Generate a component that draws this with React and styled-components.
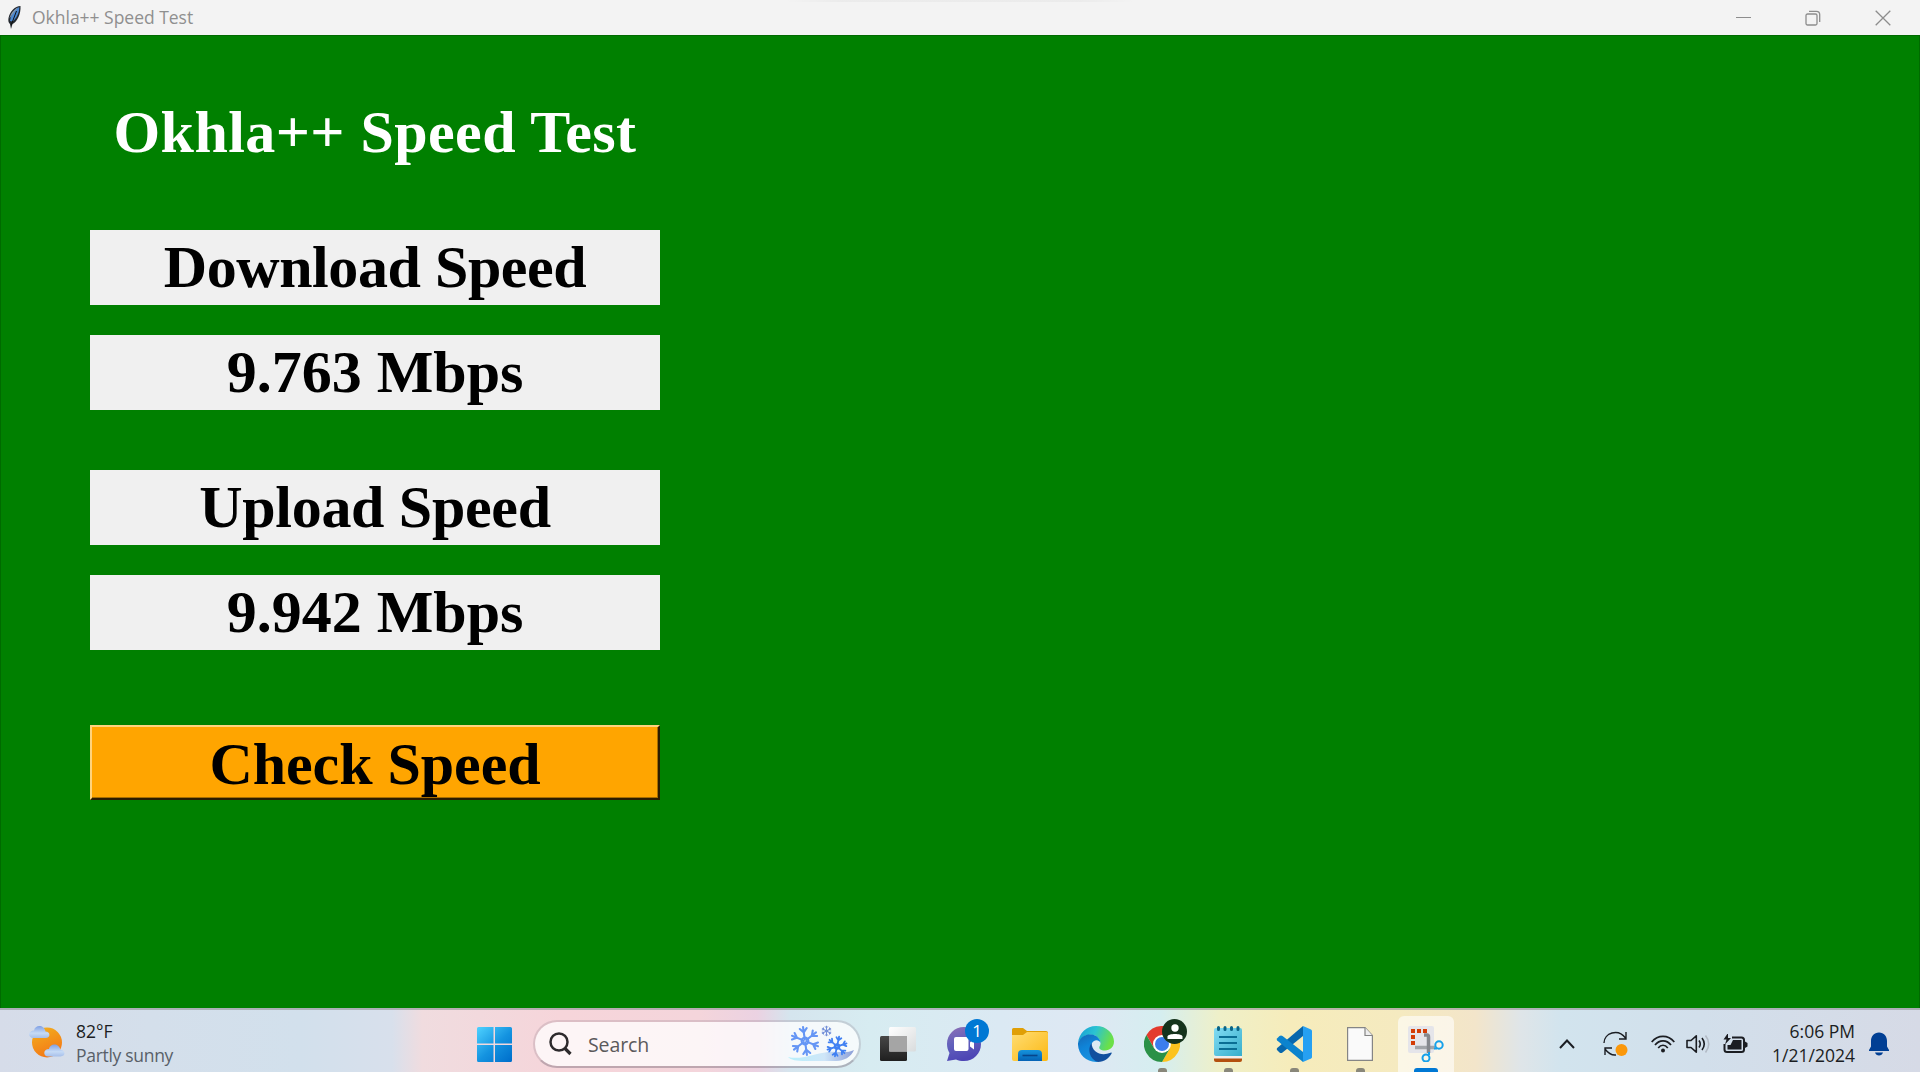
import React from "react";
import styled, { createGlobalStyle } from "styled-components";

const Global = createGlobalStyle`
  html, body { margin: 0; padding: 0; overflow: hidden; }
  * { box-sizing: border-box; }
`;

const Screen = styled.div`
  width: 1920px;
  height: 1072px;
  display: flex;
  flex-direction: column;
  overflow: hidden;
  font-family: "Open Sans", "Noto Sans", sans-serif;
`;

const TitleBar = styled.header`
  height: 35px;
  flex: none;
  display: flex;
  align-items: center;
  background: linear-gradient(90deg, rgba(0, 0, 0, 0), rgba(0, 0, 0, 0.03) 15%, rgba(0, 0, 0, 0.03) 85%, rgba(0, 0, 0, 0))
    785px 0 / 350px 2px no-repeat #f3f3f3;
  padding: 0 2px 0 6px;
  color: #8f8f8f;
`;

const WindowTitle = styled.span`
  margin-left: 10px;
  flex: 1;
  font-size: 17.5px;
  line-height: 35px;
  letter-spacing: -0.02px;
  white-space: nowrap;
`;

const WindowButtons = styled.div`
  display: flex;
`;

const WindowButton = styled.div`
  width: 70px;
  height: 33px;
  display: flex;
  align-items: center;
  justify-content: center;
`;

const Client = styled.main`
  flex: 1;
  background: #008000;
  border: 1px solid #006a00;
  border-bottom: 0;
  padding: 54px 0 0 89px;
`;

const Column = styled.div`
  width: 570px;
  display: flex;
  flex-direction: column;
`;

const Label = styled.div`
  height: 75px;
  margin-top: ${(p) => p.$gap}px;
  background: ${(p) => (p.$plain ? "transparent" : "#f0f0f0")};
  color: ${(p) => (p.$plain ? "#fff" : "#000")};
  font: bold 60px/75px "Liberation Serif", "Times New Roman", serif;
  letter-spacing: ${(p) => p.$track || 0}px;
  text-align: center;
  white-space: nowrap;
`;

const CheckButton = styled.button`
  height: 75px;
  margin-top: 75px;
  padding: 4px 0 0;
  background: #ffa500;
  border: 2px solid;
  border-color: #ffd37d #2b1c00 #2b1c00 #ffd37d;
  box-shadow: inset -1px -1px 0 #a86d00;
  color: #000;
  font: bold 60px/75px "Liberation Serif", "Times New Roman", serif;
  letter-spacing: -0.05px;
  text-align: center;
  display: flex;
  align-items: center;
  justify-content: center;
`;

const Taskbar = styled.footer`
  height: 64px;
  flex: none;
  display: flex;
  align-items: center;
  border-top: 2px solid rgba(150, 150, 155, 0.65);
  background: linear-gradient(90deg, #d6dce9 0, #d4dfeb 150px, #d2e0ec 300px, #d8e0ec 392px,
    #f0dcdf 422px, #f2d9dd 480px, #f6d5da 560px, #f4d5db 700px, #ebd2e2 757px, #d5e5ee 790px,
    #d7ecf1 870px, #dbe9f3 1000px, #dee8f3 1090px, #d5eef0 1160px, #eff0c8 1220px,
    #f6ecbb 1290px, #f5eac0 1400px, #f3e5ca 1475px, #dfe5e8 1520px, #d2e4ee 1560px,
    #d2dfeb 1700px, #d6dae6 1920px);
`;

const Weather = styled.div`
  width: 461px;
  padding: 1px 0 0 27px;
  display: flex;
  align-items: center;
`;

const WeatherText = styled.div`
  margin-left: 11px;
  padding-top: 3px;
  font-size: 17.5px;
  line-height: 24px;
  color: #1b1d22;
  white-space: nowrap;
`;

const Muted = styled.div`
  color: #595f68;
  letter-spacing: -0.3px;
`;

const Slot = styled.div`
  position: relative;
  width: 66px;
  height: 62px;
  padding-top: 6px;
  flex: none;
  display: flex;
  align-items: center;
  justify-content: center;
`;

const Tile = styled.div`
  width: 56px;
  height: 56px;
  border-radius: 6px 6px 0 0;
  background: rgba(255, 255, 255, 0.6);
  display: flex;
  align-items: center;
  justify-content: center;
`;

const Indicator = styled.i`
  position: absolute;
  bottom: 0;
  left: ${(p) => (p.$active ? 21 : 29)}px;
  width: ${(p) => (p.$active ? 24 : 9)}px;
  height: 4px;
  border-radius: 3px 3px 0 0;
  background: ${(p) => (p.$active ? "#0078d4" : "#89877a")};
`;

const Badge = styled.span`
  position: absolute;
  left: ${(p) => p.$left}px;
  top: ${(p) => p.$top}px;
  width: ${(p) => p.$size}px;
  height: ${(p) => p.$size}px;
  border-radius: 50%;
  display: flex;
  align-items: center;
  justify-content: center;
  background: ${(p) => p.$color};
  color: #fff;
  font-size: 17px;
  line-height: 24px;
`;

const SearchBox = styled.div`
  width: 328px;
  height: 48px;
  margin: 5px 4px 0 6px;
  flex: none;
  display: flex;
  align-items: center;
  padding: 0 4px 0 14px;
  border: 2px solid rgba(130, 110, 125, 0.22);
  border-bottom-color: rgba(110, 95, 110, 0.4);
  border-radius: 24px;
  background: rgba(255, 255, 255, 0.75);
  background-clip: padding-box;
`;

const SearchText = styled.span`
  flex: 1;
  margin-left: 16px;
  padding-top: 2px;
  font-size: 19.5px;
  letter-spacing: -0.1px;
  color: #5b595b;
`;

const Tray = styled.div`
  flex: 1;
  display: flex;
  align-items: center;
  padding-top: 5px;
  padding-left: 100px;
`;

const TrayIcon = styled.div`
  display: flex;
  margin-left: ${(p) => p.$gap || 0}px;
`;

const Clock = styled.div`
  width: 107px;
  margin-top: -1px;
  font-size: 17.5px;
  line-height: 24px;
  text-align: right;
  color: #1b1d22;
  white-space: nowrap;
`;

const Feather = () => (
  <svg width="16" height="25" viewBox="0 0 16 25">
    <path d="M14.500 1C9 1 4 6 2.500 13C2 16 2.500 18 4 19L5 24L6.500 19C11 17 15 9 14.500 1Z" fill="#23282f" />
    <path d="M13.300 2C8 4 5 9 4 16L6.500 16.500C10 14 13.500 8 13.300 2Z" fill="#4b88d2" />
    <path d="M12 2.500C7.500 4.500 4.500 9 3.500 13.500L7.500 8Z" fill="#8797aa" />
    <path d="M10.500 6L5.200 20" stroke="#101010" strokeWidth="1" fill="none" />
  </svg>
);

const cloud = "M5 13H17C22.500 13 22 6.500 17 6.500C16 -.5 6.500 -1 5.500 5.500C-.5 5.500 -1 13 5 13Z";

const WeatherIcon = () => (
  <svg width="38" height="36" viewBox="0 0 38 36">
    <defs>
      <linearGradient id="sun" x1="0" y1="0" x2=".4" y2="1">
        <stop stopColor="#f2b21f" /><stop offset="1" stopColor="#f47a16" />
      </linearGradient>
      <linearGradient id="cloud" x1="0" y1="0" x2="0" y2="1">
        <stop stopColor="#7f9fe4" /><stop offset=".6" stopColor="#c6dbf6" /><stop offset="1" stopColor="#a6bfea" />
      </linearGradient>
    </defs>
    <circle cx="20" cy="18.500" r="15" fill="url(#sun)" />
    <path d={cloud} transform="translate(1.500 1)" fill="url(#cloud)" />
    <path d={cloud} transform="translate(16.500 19.500)" fill="url(#cloud)" />
  </svg>
);

const StartIcon = () => (
  <svg width="35" height="35" viewBox="0 0 35 35">
    <defs>
      <linearGradient id="win" gradientUnits="userSpaceOnUse" x1="0" y1="0" x2="32" y2="35">
        <stop stopColor="#4fd2ff" /><stop offset=".55" stopColor="#1493e0" /><stop offset="1" stopColor="#0070cc" />
      </linearGradient>
    </defs>
    <path fill="url(#win)" d="M1.500 0H16.500V16.500H0V1.500Q0 0 1.500 0ZM18 0H33.500Q35 0 35 1.500V16.500H18ZM0 18H16.500V35H1.500Q0 35 0 33.500ZM18 18H35V33.500Q35 35 33.500 35H18Z" />
  </svg>
);

const Magnifier = () => (
  <svg width="23" height="24" viewBox="0 0 23 24" fill="none" stroke="#2d2a2c">
    <circle cx="10" cy="10" r="8.500" strokeWidth="2.500" />
    <path d="M16 16.500L21.500 22" strokeWidth="3.200" />
  </svg>
);

const Flake = ({ x, y, r, w, color, turn = 0 }) => (
  <g transform={`translate(${x} ${y}) rotate(${turn})`} stroke={color} strokeWidth={w} fill="none" strokeLinecap="round">
    {[0, 60, 120, 180, 240, 300].map((a) => (
      <path
        key={a}
        transform={`rotate(${a})`}
        d={`M0 ${-r * 0.12}V${-r}M${-r * 0.25} ${-r * 0.9}L0 ${-r * 0.62}L${r * 0.25} ${-r * 0.9}`}
      />
    ))}
    <circle r={r * 0.24} />
  </g>
);

const SnowArt = () => (
  <svg width="68" height="38" viewBox="0 0 68 38">
    <defs>
      <linearGradient id="snow" x1="0" y1="0" x2="1" y2="0">
        <stop stopColor="#b8f0fb" /><stop offset=".55" stopColor="#cfe6f8" /><stop offset="1" stopColor="#8c9fd8" />
      </linearGradient>
    </defs>
    <path d="M1 32C14 35 26 29 41 27C51 26 59 29 67 25C64 32 57 36 49 36H19C9 36 4 35 1 32Z" fill="url(#snow)" />
    <Flake x={18} y={16} r={14} w={2.1} color="#6596f5" turn={-8} />
    <Flake x={39.5} y={6} r={4.8} w={1} color="#7490d8" />
    <Flake x={50} y={21.5} r={10} w={1.8} color="#4181f2" turn={12} />
  </svg>
);

const TaskViewIcon = () => (
  <svg width="36" height="34" viewBox="0 0 36 34">
    <defs>
      <linearGradient id="tvd" x1="0" y1="0" x2="0" y2="1"><stop stopColor="#474747" /><stop offset="1" stopColor="#1f1f1f" /></linearGradient>
      <linearGradient id="tvl" x1="0" y1="0" x2="1" y2="1"><stop stopColor="#fff" /><stop offset="1" stopColor="#d9dcdd" /></linearGradient>
    </defs>
    <rect y="9" width="27" height="25" rx="1.500" fill="url(#tvd)" />
    <rect x="9" width="27" height="24.500" rx="1.500" fill="url(#tvl)" />
    <rect x="9" y="9" width="18" height="15.500" fill="#a5a5a5" />
  </svg>
);

const ChatIcon = () => (
  <svg width="36" height="36" viewBox="0 0 36 36">
    <defs>
      <linearGradient id="chat" x1="0" y1="0" x2=".3" y2="1"><stop stopColor="#8e6fb5" /><stop offset=".5" stopColor="#6261bc" /><stop offset="1" stopColor="#4e46b5" /></linearGradient>
    </defs>
    <path d="M18 1C8.500 1 1 8.500 1 18C1 21.500 2 24.500 3.500 27L1 35L10 33.500C12.500 34.700 15 35 18 35C27.500 35 35 27.500 35 18S27.500 1 18 1Z" fill="url(#chat)" />
    <rect x="8" y="11" width="14.500" height="14" rx="2" fill="#fff" />
    <path d="M24 16.500L28 13V23.500L24 20.500Z" fill="#fff" />
  </svg>
);

const FolderIcon = () => (
  <svg width="36" height="33" viewBox="0 0 36 33">
    <defs>
      <linearGradient id="fold" x1="0" y1="0" x2="1" y2="1"><stop stopColor="#ffdd73" /><stop offset="1" stopColor="#fcb813" /></linearGradient>
      <linearGradient id="foldb" x1="0" y1="0" x2="0" y2="1"><stop stopColor="#1593dc" /><stop offset="1" stopColor="#0563b6" /></linearGradient>
    </defs>
    <path d="M1.500 0H11L15 3H34Q36 3 36 5V12H0V1.500Q0 0 1.500 0Z" fill="#e09f06" />
    <path d="M0 7H11L15 4H34.500Q36 4 36 5.500V31Q36 33 34 33H2Q0 33 0 31Z" fill="url(#fold)" />
    <path d="M6 33V26Q6 22 10 22H26Q30 22 30 26V33Z" fill="url(#foldb)" />
    <path d="M10.500 27.500H25.500" stroke="#07458b" strokeWidth="1.600" />
  </svg>
);

const EdgeIcon = () => (
  <svg width="36" height="36" viewBox="0 0 36 36">
    <defs>
      <linearGradient id="e1" x1="0" y1="0" x2="1" y2=".3"><stop stopColor="#159bd6" /><stop offset=".5" stopColor="#2bc3d2" /><stop offset="1" stopColor="#6be048" /></linearGradient>
      <linearGradient id="e2" x1="0" y1="0" x2=".4" y2="1"><stop stopColor="#1668b5" /><stop offset=".5" stopColor="#0f84d8" /><stop offset="1" stopColor="#1a91df" /></linearGradient>
    </defs>
    <path d="M0 17C1 7 8.500 0 18 0C29 0 36 8 36 15.500C36 21 32 24.500 27 24.500C22.500 24.500 20.500 22.500 21.500 20.500C24 17 22 12 17 9.500C10 7 3 11 0 17Z" fill="url(#e1)" />
    <path d="M0 17C2.500 10.500 8 8 13 8.500C19 9 22.500 13 22.500 17C21.500 14.500 18.500 13.500 16 15C11 18 12.500 28 20 34.500C20.500 35.500 19 36 18 36C7.500 36 -.5 27.500 0 17Z" fill="url(#e2)" />
    <path d="M13.500 17C9 23 11.500 33.500 20 36C26.500 35.500 31 32.500 33.600 27.500C33.900 26.700 33.400 26.300 32.600 26.700C24 30.500 14 27 13.500 17Z" fill="#114f9e" />
  </svg>
);

const ChromeIcon = () => (
  <svg width="36" height="36" viewBox="0 0 36 36">
    <path d="M2.400 9A18 18 0 0 1 33.600 9H18L10.200 22.500Z" fill="#e33b2e" />
    <path d="M33.600 9A18 18 0 0 1 18 36L25.800 22.500L18 9Z" fill="#fcc31e" />
    <path d="M18 36A18 18 0 0 1 2.400 9L10.200 22.500H25.800Z" fill="#2a9147" />
    <circle cx="18" cy="18" r="9" fill="#fff" />
    <circle cx="18" cy="18" r="7" fill="#3b7ded" />
  </svg>
);

const PersonIcon = () => (
  <svg width="16" height="16" viewBox="0 0 16 16" fill="#fff">
    <circle cx="8" cy="4" r="3.700" />
    <path d="M.5 15V12.500C.5 9 15.500 9 15.500 12.500V15Z" />
  </svg>
);

const NotepadIcon = () => (
  <svg width="28" height="36" viewBox="0 0 28 36">
    <defs>
      <linearGradient id="note" x1="0" y1="0" x2="1" y2="1"><stop stopColor="#82dcf4" /><stop offset="1" stopColor="#37aecb" /></linearGradient>
    </defs>
    <rect y="28" width="28" height="8" rx="2" fill="#b4500e" />
    <rect y="26" width="28" height="6.500" fill="#f3eeea" />
    <path d="M2 2H26Q28 2 28 4V30H2Q0 30 0 28V4Q0 2 2 2Z" fill="url(#note)" />
    <path d="M4.500 1.500V3.500M11 1.500V3.500M17.500 1.500V3.500M24 1.500V3.500" stroke="#0b6486" strokeWidth="3" strokeLinecap="round" />
    <path d="M5 11H23M5 17H23M5 23H23" stroke="#0a6e94" strokeWidth="2" />
  </svg>
);

const CodeIcon = () => (
  <svg width="36" height="36" viewBox="0 0 36 36">
    <path d="M27 0V10L6.500 26.500Q5 27.500 3.500 26.500L1 24Q.3 23 1.200 22Z" fill="#0767ad" />
    <path d="M1.200 14.500Q.3 13.500 1 12.500L3.500 10Q5 9 6.500 10L27 26V36Z" fill="#0b83ce" />
    <path d="M27 0L35 3.500Q36 4 36 5V31Q36 32 35 32.500L27 36Z" fill="#26a0f2" />
  </svg>
);

const FileIcon = () => (
  <svg width="26" height="34" viewBox="0 0 26 34">
    <path d="M.6 .6H18L25.400 8.500V33.400H.6Z" fill="#fafafa" stroke="#858585" strokeWidth="1.200" />
    <path d="M18 .6V8.500H25.400" fill="#eee" stroke="#858585" strokeWidth="1.200" />
  </svg>
);

const SnipIcon = () => (
  <svg width="36" height="36" viewBox="0 0 36 36">
    <rect x="0" y="0" width="26" height="27" rx="2" fill="#e5e5ea" />
    <path d="M3 5H7M9 5H13M15 5H19M5 9V13M5 15V19" stroke="#d43c06" strokeWidth="4" />
    <path d="M7 21.500H27" stroke="#a2a5aa" strokeWidth="3.500" />
    <path d="M16 9H19Q20.500 9 20.500 11V27" fill="none" stroke="#85888e" strokeWidth="3.500" />
    <circle cx="31" cy="19" r="3.700" fill="none" stroke="#16a0ea" strokeWidth="2" />
    <circle cx="18" cy="32" r="3.500" fill="none" stroke="#16a0ea" strokeWidth="2" />
    <path d="M26 22.500H29M21 26V29" stroke="#16a0ea" strokeWidth="2" />
  </svg>
);

const Chevron = () => (
  <svg width="16" height="12" viewBox="0 0 16 12"><path d="M1 10L8 2.500L15 10" fill="none" stroke="#1b1d22" strokeWidth="2" /></svg>
);

const SyncIcon = () => (
  <svg width="25" height="26" viewBox="0 0 25 26" fill="none" stroke="#1b1d22" strokeWidth="1.400">
    <path d="M1 12C1 2 15 -3 22.500 7M23 1V8H16M2 24V17H9M2 18C5 22 9 24.500 13 24" />
    <circle cx="18.500" cy="19" r="6" fill="#fb980b" stroke="none" />
  </svg>
);

const WifiIcon = () => (
  <svg width="24" height="18" viewBox="0 0 24 18" fill="none" stroke="#1b1d22" strokeWidth="1.700">
    <path d="M.7 7C7 -.5 17 -.5 23.300 7M4 10C8.500 4.500 15.500 4.500 20 10M7.200 13C10 9.300 14 9.300 16.800 13" />
    <circle cx="12" cy="15.500" r="2" fill="#1b1d22" stroke="none" />
  </svg>
);

const SpeakerIcon = () => (
  <svg width="24" height="20" viewBox="0 0 24 20" fill="none" stroke="#1b1d22" strokeWidth="1.600">
    <path d="M1 6.500H5L10.300 1.800V18.200L5 13.500H1Z" strokeLinejoin="round" />
    <path d="M13 6.500Q15.500 10 13 13.500M16 4Q20.500 10 16 16" />
    <path d="M19.500 1.500Q26 10 19.500 18.500" stroke="#b2bac5" />
  </svg>
);

const BatteryIcon = () => (
  <svg width="25" height="20" viewBox="0 0 25 20">
    <path d="M9 3.500H18.500Q21 3.500 21 6V15.500Q21 18 18.500 18H4Q1.500 18 1.500 15.500V10" fill="none" stroke="#1b1d22" strokeWidth="2" />
    <path d="M10 6H18.500V15.500H4.500V11H7.500Z" fill="#1b1d22" />
    <path d="M22 7.500L24.500 9V12.500L22 14Z" fill="#1b1d22" />
    <path d="M5 -1L.5 5.500H3.500L2 10.500L8 4H5Z" fill="#1b1d22" />
  </svg>
);

const BellIcon = () => (
  <svg width="20" height="24" viewBox="0 0 20 24" fill="#013f94">
    <path d="M10 .5C5 .5 2 4.500 2 9V14.500L0 18V19H20V18L18 14.500V9C18 4.500 15 .5 10 .5ZM6 20.500H14Q13 23.500 10 23.500T6 20.500Z" />
  </svg>
);

export default function App() {
  return (
    <Screen>
      <Global />
      <TitleBar>
        <Feather />
        <WindowTitle>Okhla++ Speed Test</WindowTitle>
        <WindowButtons>
          <WindowButton>
            <svg width="15" height="15"><path d="M0 7.500H15" stroke="#8d8d8d" /></svg>
          </WindowButton>
          <WindowButton>
            <svg width="16" height="16" fill="none" stroke="#8d8d8d" strokeWidth="1.300">
              <rect x="1" y="4" width="11" height="11" rx="1.500" />
              <path d="M4 1.300H11.500Q14.700 1.300 14.700 4.500V12" />
            </svg>
          </WindowButton>
          <WindowButton>
            <svg width="16" height="16"><path d="M.7 .7L15.300 15.300M15.300 .7L.7 15.300" stroke="#8d8d8d" strokeWidth="1.300" /></svg>
          </WindowButton>
        </WindowButtons>
      </TitleBar>

      <Client>
        <Column>
          <Label $plain $gap={5} $track={0.43}>Okhla++ Speed Test</Label>
          <Label $gap={60} $track={-0.43}>Download Speed</Label>
          <Label $gap={30}>9.763 Mbps</Label>
          <Label $gap={60} $track={-0.3}>Upload Speed</Label>
          <Label $gap={30}>9.942 Mbps</Label>
          <CheckButton>Check Speed</CheckButton>
        </Column>
      </Client>

      <Taskbar>
        <Weather>
          <WeatherIcon />
          <WeatherText>
            <div>82°F</div>
            <Muted>Partly sunny</Muted>
          </WeatherText>
        </Weather>
        <Slot><StartIcon /></Slot>
        <SearchBox>
          <Magnifier />
          <SearchText>Search</SearchText>
          <SnowArt />
        </SearchBox>
        <Slot><TaskViewIcon /></Slot>
        <Slot>
          <ChatIcon />
          <Badge $left={34} $top={9} $size={24} $color="#0078d4">1</Badge>
        </Slot>
        <Slot><FolderIcon /></Slot>
        <Slot><EdgeIcon /></Slot>
        <Slot>
          <ChromeIcon />
          <Badge $left={33} $top={9} $size={25} $color="#15331c"><PersonIcon /></Badge>
          <Indicator />
        </Slot>
        <Slot><NotepadIcon /><Indicator /></Slot>
        <Slot><CodeIcon /><Indicator /></Slot>
        <Slot><FileIcon /><Indicator /></Slot>
        <Slot>
          <Tile><SnipIcon /></Tile>
          <Indicator $active />
        </Slot>
        <Tray>
          <TrayIcon><Chevron /></TrayIcon>
          <TrayIcon $gap={28}><SyncIcon /></TrayIcon>
          <TrayIcon $gap={23}><WifiIcon /></TrayIcon>
          <TrayIcon $gap={11}><SpeakerIcon /></TrayIcon>
          <TrayIcon $gap={13}><BatteryIcon /></TrayIcon>
          <Clock>
            <div>6:06 PM</div>
            <div>1/21/2024</div>
          </Clock>
          <TrayIcon $gap={14}><BellIcon /></TrayIcon>
        </Tray>
      </Taskbar>
    </Screen>
  );
}
